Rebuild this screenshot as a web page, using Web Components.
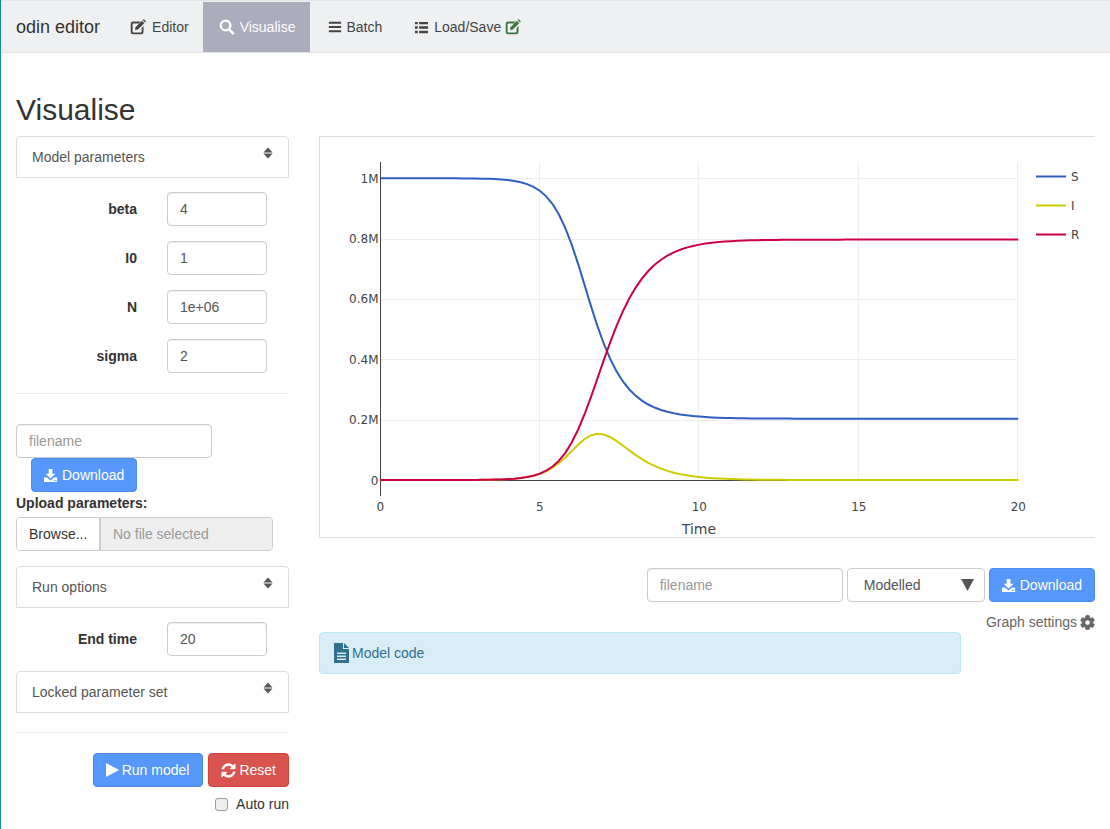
<!DOCTYPE html>
<html>
<head>
<meta charset="utf-8">
<title>odin editor</title>
<style>
  html, body { margin: 0; padding: 0; background: #fff; }
  body {
    min-height: 829px;
    box-sizing: border-box;
    border-left: 1px solid #17968f;
    font-family: "Liberation Sans", Arial, sans-serif;
    font-size: 14px;
    line-height: 20px;
    color: #333;
    overflow: hidden;
  }
</style>
</head>
<body>
<odin-nav></odin-nav>
<odin-page heading="Visualise">
  <odin-sidebar slot="side"></odin-sidebar>
  <odin-results slot="main"></odin-results>
</odin-page>

<script>
  const ICONS = {
    edit: '<path d="M3 2.500h7.500L8.800 4.400H3.300a.7.7 0 0 0-.7.7v7.600c0 .4.3.7.7.7h7.600a.7.7 0 0 0 .7-.7V8.900l1.900-1.900v6a2.300 2.300 0 0 1-2.300 2.300H3a2.300 2.300 0 0 1-2.300-2.300V4.800A2.300 2.300 0 0 1 3 2.500z"/><path d="M5.500 8.200 11.900 1.800l2.400 2.400-6.400 6.400-2.900.5z"/><path d="M12.600 1.100l.5-.5a.8.8 0 0 1 1.100 0l1.300 1.300a.8.8 0 0 1 0 1.100l-.5.5z"/>',
    search: '<path fill-rule="evenodd" d="M6.500 .5a6 6 0 0 1 4.900 9.400l4.200 4.200-1.800 1.800-4.200-4.200A6 6 0 1 1 6.500 .5zm0 2.300a3.700 3.700 0 1 0 0 7.400 3.700 3.700 0 0 0 0-7.400z"/>',
    menu: '<path d="M1 2h14v2.400H1zM1 6.800h14v2.400H1zM1 11.600h14V14H1z"/>',
    list: '<path d="M1 2h3v2.600H1zM5.500 2H15v2.600H5.500zM1 6.700h3v2.600H1zM5.500 6.700H15v2.600H5.500zM1 11.400h3V14H1zM5.500 11.400H15V14H5.500z"/>',
    save: '<g transform="translate(-1 0)"><path d="M6 1h4v5h3.200L8 11.200 2.800 6H6z"/><path fill-rule="evenodd" d="M1 10h3.200L8 13.400 11.800 10H15v5H1zm10.500 2.900v.9h1v-.9zm1.700 0v.9h1v-.9z"/></g>',
    play: '<path d="M0 0v16L15 8z"/>',
    refresh: '<g transform="rotate(45 8 8) translate(-2.800 -2.800) scale(.9)"><path d="M12 6v3l4-4-4-4v3c-4.420 0-8 3.580-8 8 0 1.570.46 3.030 1.240 4.260L6.700 14.800c-.45-.83-.7-1.790-.7-2.800 0-3.310 2.690-6 6-6zm6.760 1.740L17.300 9.200c.44.84.7 1.790.7 2.800 0 3.310-2.690 6-6 6v-3l-4 4 4 4v-3c4.420 0 8-3.580 8-8 0-1.570-.46-3.030-1.240-4.260z" stroke="currentColor" stroke-width="1"/></g>',
    cog: '<g transform="scale(.78) translate(-1.700 -1.700)"><path d="M19.140 12.940c.04-.3.06-.61.06-.94 0-.32-.02-.64-.07-.94l2.030-1.580a.49.49 0 0 0 .12-.61l-1.920-3.320a.488.488 0 0 0-.59-.22l-2.390.96c-.5-.38-1.030-.7-1.620-.94l-.36-2.540a.484.484 0 0 0-.48-.41h-3.840c-.24 0-.43.17-.47.41l-.36 2.540c-.59.24-1.130.57-1.620.94l-2.390-.96c-.22-.08-.47 0-.59.22L2.740 8.870c-.12.21-.08.47.12.61l2.030 1.580c-.05.3-.09.63-.09.94s.02.64.07.94l-2.030 1.580a.49.49 0 0 0-.12.61l1.920 3.320c.12.22.37.29.59.22l2.390-.96c.5.38 1.030.7 1.620.94l.36 2.540c.05.24.24.41.48.41h3.840c.24 0 .44-.17.47-.41l.36-2.540c.59-.24 1.130-.56 1.620-.94l2.390.96c.22.08.47 0 .59-.22l1.920-3.320c.12-.22.07-.47-.12-.61l-2.010-1.580zM12 15.600c-1.980 0-3.600-1.620-3.600-3.600s1.620-3.600 3.600-3.600 3.600 1.620 3.600 3.600-1.620 3.600-3.600 3.600z" stroke="currentColor" stroke-width="1"/></g>',
    sort: '<path d="M8 2.500l4.500 5h-9zM8 13.500l-4.500-5h9z"/>'
  };

  function icon(name, size) {
    return `<svg width="${size}" height="${size}" viewBox="0 0 16 16" fill="currentColor" style="flex:none;display:block">${ICONS[name]}</svg>`;
  }

  class OdinNav extends HTMLElement {
    connectedCallback() {
      this.attachShadow({ mode: 'open' });
      this.shadowRoot.innerHTML = `
        <style>
          :host {
            display: flex;
            box-sizing: border-box;
            height: 53px;
            padding-top: 1px;
            background: #eff0f2;
            border-top: 1px solid #e6e7e9;
            border-bottom: 1px solid #e3e3e3;
            color: #444;
          }
          .brand { font-size: 18px; color: #333; padding: 0 15px; line-height: 50px; }
          .item { display: flex; align-items: center; gap: 5px; padding: 0 15px; height: 50px; }
          .item.active { background: #abacbc; color: #fff; padding-left: 16px; }
          .green { color: #3c763d; margin-left: -1px; }
        </style>
        <div class="brand">odin editor</div>
        <div class="item" style="gap:6px;padding-right:14px">${icon('edit', 16)}<span>Editor</span></div>
        <div class="item active">${icon('search', 16)}<span>Visualise</span></div>
        <div class="item" style="gap:4px;padding:0 17px 0 18px">${icon('menu', 14)}<span>Batch</span></div>
        <div class="item">${icon('list', 15)}<span>Load/Save</span><span class="green">${icon('edit', 16)}</span></div>
      `;
    }
  }

  class OdinPage extends HTMLElement {
    connectedCallback() {
      this.attachShadow({ mode: 'open' });
      this.shadowRoot.innerHTML = `
        <style>
          :host { display: block; padding: 40px 15px 0; }
          h2 { margin: 0 0 10px; font-size: 30px; line-height: 33px; font-weight: 400; color: #333; }
          .cols { display: grid; grid-template-columns: 273px 776px; column-gap: 30px; align-items: start; }
        </style>
        <h2>${this.getAttribute('heading')}</h2>
        <div class="cols">
          <slot name="side"></slot>
          <slot name="main"></slot>
        </div>
      `;
    }
  }

  class OdinHead extends HTMLElement {
    connectedCallback() {
      this.attachShadow({ mode: 'open' });
      this.shadowRoot.innerHTML = `
        <style>
          :host {
            display: flex;
            justify-content: space-between;
            align-items: flex-start;
            box-sizing: border-box;
            height: 42px;
            padding: 10px 15px;
            border: 1px solid #ddd;
            border-radius: 4px 4px 0 0;
            color: #555;
          }
          .sort { margin: -2px -3px 0 0; color: #555; }
        </style>
        <slot></slot>
        <span class="sort">${icon('sort', 16)}</span>
      `;
    }
  }

  class OdinField extends HTMLElement {
    connectedCallback() {
      this.attachShadow({ mode: 'open' });
      const placeholder = this.hasAttribute('placeholder');
      this.shadowRoot.innerHTML = `
        <style>
          :host {
            display: block;
            box-sizing: border-box;
            height: 34px;
            padding: 6px 12px;
            border: 1px solid #ccc;
            border-radius: 4px;
            background: #fff;
            box-shadow: inset 0 1px 1px rgba(0,0,0,.075);
            color: ${placeholder ? '#999' : '#555'};
          }
        </style>
        <slot></slot>
      `;
    }
  }

  class OdinParam extends HTMLElement {
    connectedCallback() {
      this.attachShadow({ mode: 'open' });
      this.shadowRoot.innerHTML = `
        <style>
          :host { display: grid; grid-template-columns: 121px 100px; column-gap: 30px; align-items: center; margin-top: 15px; }
          .label { text-align: right; font-weight: 700; color: #333; }
        </style>
        <div class="label">${this.getAttribute('label')}</div>
        <odin-field>${this.getAttribute('value')}</odin-field>
      `;
    }
  }

  class OdinBtn extends HTMLElement {
    connectedCallback() {
      this.attachShadow({ mode: 'open' });
      const danger = this.getAttribute('variant') === 'danger';
      const play = this.getAttribute('icon') === 'play';
      this.shadowRoot.innerHTML = `
        <style>
          :host {
            display: inline-flex;
            align-items: center;
            gap: ${play ? 2 : 3}px;
            box-sizing: border-box;
            height: 34px;
            padding: 0 ${play ? 13 : 12}px 0 12px;
            border: 1px solid ${danger ? '#d43f3a' : '#4a8cf0'};
            border-radius: 4px;
            background: ${danger ? '#d9534f' : '#5597fb'};
            color: #fff;
          }
        </style>
        ${icon(this.getAttribute('icon'), play ? 14 : 15)}<slot></slot>
      `;
    }
  }

  class OdinSelect extends HTMLElement {
    connectedCallback() {
      this.attachShadow({ mode: 'open' });
      this.shadowRoot.innerHTML = `
        <style>
          :host {
            display: flex;
            justify-content: space-between;
            align-items: center;
            box-sizing: border-box;
            width: 138px;
            height: 34px;
            padding: 0 10px 0 16px;
            border: 1px solid #ccc;
            border-radius: 4px;
            background: #fff;
            color: #555;
          }
        </style>
        <slot></slot>
        <svg width="13" height="12" viewBox="0 0 13 12" fill="#555"><path d="M0 0h13L6.500 12z"/></svg>
      `;
    }
  }

  class OdinSidebar extends HTMLElement {
    connectedCallback() {
      this.attachShadow({ mode: 'open' });
      this.shadowRoot.innerHTML = `
        <style>
          :host { display: block; }
          hr { border: 0; border-top: 1px solid #eee; margin: 0; }
          .file { width: 196px; margin-top: 30px; }
          .dl { margin-left: 15px; display: flex; }
          .upload { font-weight: 700; margin-top: 1px; line-height: 20px; color: #333; }
          .browse { display: flex; width: 257px; height: 34px; margin-top: 4px; box-sizing: border-box; border: 1px solid #ccc; border-radius: 4px; overflow: hidden; }
          .browse .btn { width: 84px; padding: 6px 0 0 12px; box-sizing: border-box; border-right: 2px solid #ccc; color: #333; background: #fff; }
          .browse .name { flex: 1; padding: 6px 12px; background: #eee; color: #999; }
          .actions { display: flex; justify-content: flex-end; gap: 5px; margin-top: 20px; }
          .auto { display: flex; justify-content: flex-end; align-items: center; gap: 8px; margin-top: 7px; }
          .box { width: 11px; height: 11px; border: 1px solid #999; border-radius: 3px; background: #eee; }
        </style>
        <odin-head>Model parameters</odin-head>
        <odin-param label="beta" value="4" style="margin-top:14px"></odin-param>
        <odin-param label="I0" value="1"></odin-param>
        <odin-param label="N" value="1e+06"></odin-param>
        <odin-param label="sigma" value="2"></odin-param>
        <hr style="margin-top:20px">
        <odin-field class="file" placeholder>filename</odin-field>
        <div class="dl"><odin-btn icon="save">Download</odin-btn></div>
        <div class="upload">Upload parameters:</div>
        <div class="browse"><div class="btn">Browse...</div><div class="name">No file selected</div></div>
        <odin-head style="margin-top:15px">Run options</odin-head>
        <odin-param label="End time" value="20" style="margin-top:14px"></odin-param>
        <odin-head style="margin-top:15px">Locked parameter set</odin-head>
        <hr style="margin-top:19px">
        <div class="actions">
          <odin-btn icon="play">Run model</odin-btn>
          <odin-btn icon="refresh" variant="danger">Reset</odin-btn>
        </div>
        <div class="auto"><span class="box"></span><span>Auto run</span></div>
      `;
    }
  }

  // SIR model, same parameters as the form on the left
  function runModel(beta, sigma, N, I0, tEnd, dt) {
    const deriv = ([S, I]) => {
      const inf = beta * S * I / N;
      return [-inf, inf - sigma * I, sigma * I];
    };
    let y = [N - I0, I0, 0];
    const out = [];
    const steps = Math.round(tEnd / dt);
    for (let i = 0; i <= steps; i++) {
      if (i % 4 === 0) out.push([i * dt, y[0], y[1], y[2]]);
      const k1 = deriv(y);
      const k2 = deriv(y.map((v, j) => v + dt / 2 * k1[j]));
      const k3 = deriv(y.map((v, j) => v + dt / 2 * k2[j]));
      const k4 = deriv(y.map((v, j) => v + dt * k3[j]));
      y = y.map((v, j) => v + dt / 6 * (k1[j] + 2 * k2[j] + 2 * k3[j] + k4[j]));
    }
    return out;
  }

  class OdinChart extends HTMLElement {
    connectedCallback() {
      this.attachShadow({ mode: 'open' });
      const px = t => 380.3 + t * 31.9;
      const py = v => 480 - v * 301.7 / 1e6;
      const data = runModel(4, 2, 1e6, 1, 20, 0.05);
      const line = col => data.map(d => `${px(d[0]).toFixed(2)},${py(d[col]).toFixed(2)}`).join(' ');

      const xTicks = [0, 5, 10, 15, 20];
      const yTicks = [[0, '0'], [0.2e6, '0.2M'], [0.4e6, '0.4M'], [0.6e6, '0.6M'], [0.8e6, '0.8M'], [1e6, '1M']];
      const grid = xTicks.slice(1).map(t => `<path d="M${Math.round(px(t)) - .5} 162V480" stroke="#eee"/>`).join('')
        + yTicks.slice(1).map(([v]) => `<path d="M380 ${Math.round(py(v)) + .5}H1018" stroke="#eee"/>`).join('');
      const xLabels = xTicks.map(t => `<text x="${px(t)}" y="511" text-anchor="middle">${t}</text>`).join('');
      const yLabels = yTicks.map(([v, s]) => `<text x="378.500" y="${py(v) + 4.500}" text-anchor="end">${s}</text>`).join('');
      const legend = [['S', '#2e5fc0', 176.5, ''], ['I', '#cccc00', 205.5, 'font-family="DejaVu Sans Mono"'], ['R', '#cc0044', 234.5, '']]
        .map(([s, c, y, f]) => `<path d="M1036 ${y}H1066" stroke="${c}" stroke-width="2"/><text x="1071" y="${y + 4.500}" ${f}>${s}</text>`).join('');

      this.shadowRoot.innerHTML = `
        <style>
          :host { display: block; height: 402px; box-sizing: border-box; border: 1px solid #ddd; border-right: 0; }
          svg { display: block; }
          text { font-family: "DejaVu Sans", Verdana, sans-serif; font-size: 12px; fill: #444; }
          .title { font-size: 14px; }
        </style>
        <svg width="775" height="400" viewBox="320 137 775 400">
          ${grid}
          <path d="M380 480.500H1018" stroke="#444"/>
          <path d="M380.500 162V496" stroke="#444"/>
          <polyline points="${line(1)}" fill="none" stroke="#2e5fc0" stroke-width="2"/>
          <polyline points="${line(2)}" fill="none" stroke="#cccc00" stroke-width="2"/>
          <polyline points="${line(3)}" fill="none" stroke="#cc0044" stroke-width="2"/>
          ${xLabels}${yLabels}
          <text class="title" x="699" y="534" text-anchor="middle">Time</text>
          ${legend}
        </svg>
      `;
    }
  }

  class OdinResults extends HTMLElement {
    connectedCallback() {
      this.attachShadow({ mode: 'open' });
      this.shadowRoot.innerHTML = `
        <style>
          :host { display: block; }
          .export { display: flex; justify-content: flex-end; gap: 4px; margin-top: 30px; }
          .export odin-field { width: 196px; }
          .settings { display: flex; justify-content: flex-end; align-items: center; gap: 3px; margin-top: 10px; height: 20px; color: #666; }
          .code {
            display: flex;
            align-items: center;
            gap: 3px;
            box-sizing: border-box;
            width: 642px;
            height: 42px;
            padding: 0 14px;
            background: #d9edf7;
            border: 1px solid #bce8f1;
            border-radius: 4px;
            color: #31708f;
          }
          .code svg { flex: none; display: block; }
        </style>
        <odin-chart></odin-chart>
        <div class="export">
          <odin-field placeholder>filename</odin-field>
          <odin-select>Modelled</odin-select>
          <odin-btn icon="save">Download</odin-btn>
        </div>
        <div class="settings"><span>Graph settings</span>${icon('cog', 15)}</div>
        <div class="code">
          <svg width="15" height="20" viewBox="0 0 15 20" fill="currentColor">
            <path fill-rule="evenodd" d="M0 0H9V6H15V20H0zM3 9.500v1.500h9V9.500zM3 12.500v1.500h9v-1.500zM3 15.500V17h9v-1.500z"/>
            <path d="M10 0l5 5h-5z"/>
          </svg>
          <span>Model code</span>
        </div>
      `;
    }
  }

  customElements.define('odin-nav', OdinNav);
  customElements.define('odin-page', OdinPage);
  customElements.define('odin-head', OdinHead);
  customElements.define('odin-field', OdinField);
  customElements.define('odin-param', OdinParam);
  customElements.define('odin-btn', OdinBtn);
  customElements.define('odin-select', OdinSelect);
  customElements.define('odin-chart', OdinChart);
  customElements.define('odin-sidebar', OdinSidebar);
  customElements.define('odin-results', OdinResults);
</script>
</body>
</html>
